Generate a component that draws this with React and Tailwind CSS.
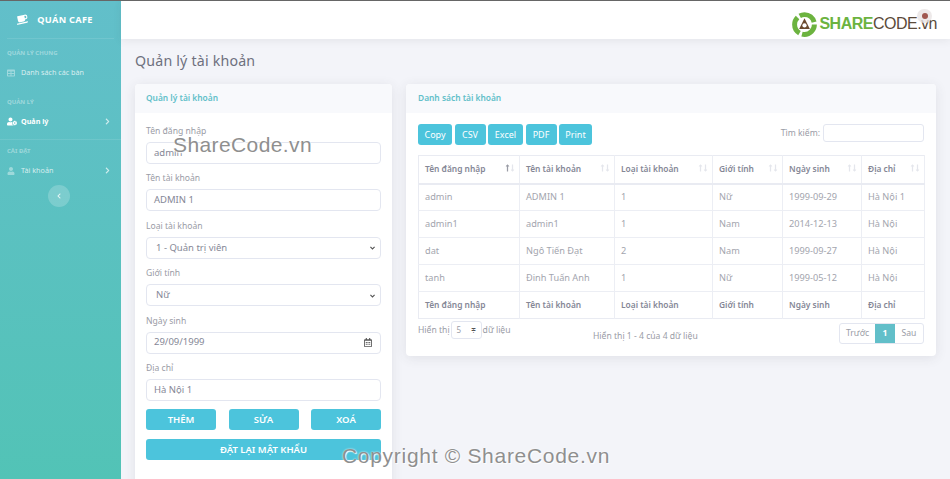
import React from 'react';
import { FaCoffee, FaTable, FaUserCog, FaUser, FaChevronRight, FaChevronLeft, FaRegCalendarAlt, FaLongArrowAltUp, FaLongArrowAltDown } from 'react-icons/fa';

const font = "font-['Noto_Sans',sans-serif]";

const rows = [
    ['admin', 'ADMIN 1', '1', 'Nữ', '1999-09-29', 'Hà Nội 1'],
    ['admin1', 'admin1', '1', 'Nam', '2014-12-13', 'Hà Nội'],
    ['dat', 'Ngô Tiến Đạt', '2', 'Nam', '1999-09-27', 'Hà Nội'],
    ['tanh', 'Đinh Tuấn Anh', '1', 'Nữ', '1999-05-12', 'Hà Nội'],
];
const cols = ['Tên đăng nhập', 'Tên tài khoản', 'Loại tài khoản', 'Giới tính', 'Ngày sinh', 'Địa chỉ'];
const colWidths = ['w-[101px]', 'w-[95px]', 'w-[98px]', 'w-[70px]', 'w-[79px]', 'w-[63px]'];

const SideHeading = ({ children }) => (
    <div className="text-[6px] leading-[8px] font-bold text-white/40 px-[7px] uppercase">{children}</div>
);

const SideItem = ({ icon, label, active, arrow }) => (
    <div className={`flex items-center h-[31px] pl-[7px] pr-[11px] text-[7.2px] ${active ? 'text-white font-bold' : 'text-white/75'}`}>
        <span className="w-[14px] flex">{icon}</span>
        <span className="flex-1">{label}</span>
        {arrow && <FaChevronRight className="w-[5px] h-[7px] text-white/70" />}
    </div>
);

const Sidebar = () => (
    <div className="w-[121px] shrink-0 bg-gradient-to-b from-[#62bfca] to-[#52c3b6] flex flex-col">
        <div className="flex items-center justify-center gap-[9px] h-[38px] mx-[7px] border-b border-white/10 pr-[12px]">
            <FaCoffee className="w-[12px] h-[11px] text-white -rotate-12" />
            <span className="text-[9.2px] font-bold tracking-[0.3px] text-white">QUÁN CAFE</span>
        </div>
        <div className="pt-[10px]">
            <SideHeading>Quản lý chung</SideHeading>
            <SideItem icon={<FaTable className="w-[8px] h-[8px] text-white/40" />} label="Danh sách các bàn" />
        </div>
        <div className="pt-[10px] pb-[2px] border-b border-white/10 mx-0">
            <SideHeading>Quản lý</SideHeading>
            <SideItem active arrow icon={<FaUserCog className="w-[10px] h-[9px] text-white" />} label="Quản lý" />
        </div>
        <div className="pt-[7px]">
            <SideHeading>Cài đặt</SideHeading>
            <SideItem arrow icon={<FaUser className="w-[8px] h-[8px] text-white/40" />} label="Tài khoản" />
        </div>
        <div className="flex justify-center pr-[3px] -mt-[1px]">
            <div className="w-[22px] h-[22px] rounded-full bg-white/20 flex items-center justify-center">
                <FaChevronLeft className="w-[4px] h-[6px] text-white/80" />
            </div>
        </div>
    </div>
);

const Logo = () => (
    <div className="flex items-center">
        <svg viewBox="0 0 30 30" className="w-[27px] h-[27px]">
            <circle cx="15" cy="15" r="11" fill="none" stroke="#6cb33f" strokeWidth="5.5" strokeDasharray="20 3" />
            <path d="M15 8 L21 20 L9 20 Z" fill="#6b4a2f" />
            <circle cx="15" cy="16" r="2.4" fill="#fff" />
        </svg>
        <span className="ml-[1px] text-[16px] leading-none font-['Liberation_Sans',sans-serif] relative tracking-[-0.5px]">
            <span className="font-bold text-[#6cb33f]">SHARE</span>
            <span className="text-[#5b4a3a]">CODE</span>
            <span className="text-[#5b4a3a]">.vn</span>
            <span className="absolute right-[5px] -top-[7px] w-[15px] h-[14px] rounded-full bg-[#e8e4e4]/80 flex items-center justify-center">
                <span className="w-[6px] h-[6px] rounded-full bg-[#a0574f]" />
            </span>
        </span>
    </div>
);

const Field = ({ label, children }) => (
    <div className="mb-[8.4px]">
        <div className="text-[8.6px] leading-[11px] text-[#9a9ca6] pt-[1px] mb-[5px]">{label}</div>
        {children}
    </div>
);

const boxCls = 'h-[22px] bg-white border border-[#e3e6f0] rounded-[4px] flex items-center text-[9.5px] text-[#858796]';

const TextBox = ({ value }) => <div className={`${boxCls} pl-[7px]`}>{value}</div>;

const SelectBox = ({ value }) => (
    <div className={`${boxCls} pl-[9px] pr-[4px] justify-between`}>
        <span>{value}</span>
        <svg viewBox="0 0 10 10" className="w-[7px] h-[7px]"><path d="M2 4 L5 7 L8 4" fill="none" stroke="#555" strokeWidth="1.6" /></svg>
    </div>
);

const Btn = ({ label, className }) => (
    <div className={`h-[21px] rounded-[3px] bg-[#4cc4dc] text-white text-[9.5px] font-semibold flex items-center justify-center ${className}`}>{label}</div>
);

const FormCard = () => (
    <div className="w-[257px] shrink-0 h-[420px] bg-white rounded-[4px] shadow-[0_2px_12px_rgba(58,59,69,0.1)] overflow-hidden">
        <div className="h-[29px] bg-[#f8f9fc] flex items-center px-[11px] text-[8.4px] font-semibold text-[#62bfc9]">Quản lý tài khoản</div>
        <div className="px-[11px] pt-[12px]">
            <Field label="Tên đăng nhập"><TextBox value="admin" /></Field>
            <Field label="Tên tài khoản"><TextBox value="ADMIN 1" /></Field>
            <Field label="Loại tài khoản"><SelectBox value="1 - Quản trị viên" /></Field>
            <Field label="Giới tính"><SelectBox value="Nữ" /></Field>
            <Field label="Ngày sinh">
                <div className={`${boxCls} pl-[7px] pr-[8px] justify-between`}>
                    <span>29/09/1999</span>
                    <FaRegCalendarAlt className="w-[8px] h-[9px] text-[#555]" />
                </div>
            </Field>
            <Field label="Địa chỉ"><TextBox value="Hà Nội 1" /></Field>
            <div className="flex justify-between">
                <Btn label="THÊM" className="w-[70px]" />
                <Btn label="SỬA" className="w-[70px]" />
                <Btn label="XOÁ" className="w-[70px]" />
            </div>
            <Btn label="ĐẶT LẠI MẬT KHẨU" className="mt-[9px]" />
        </div>
    </div>
);

const SortIcon = ({ dark }) => (
    <span className={`absolute right-[4px] top-[8px] flex ${dark ? 'text-[#9a9ca6]' : 'text-[#e4e6ec]'}`}>
        <FaLongArrowAltUp className="w-[5px] h-[8px]" />
        <FaLongArrowAltDown className="w-[5px] h-[8px] text-[#e4e6ec]" />
    </span>
);

const TableCard = () => (
    <div className="flex-1 h-[272px] bg-white rounded-[4px] shadow-[0_2px_12px_rgba(58,59,69,0.1)] overflow-hidden">
        <div className="h-[29px] bg-[#f8f9fc] flex items-center px-[12px] text-[8.4px] font-semibold text-[#62bfc9]">Danh sách tài khoản</div>
        <div className="px-[12px] pt-[11px]">
            <div className="flex justify-between items-start h-[31px]">
                <div className="flex gap-[2.5px]">
                    {[['Copy', 'w-[34px]'], ['CSV', 'w-[31px]'], ['Excel', 'w-[35px]'], ['PDF', 'w-[31px]'], ['Print', 'w-[33px]']].map(([b, w]) => (
                        <div key={b} className={`${w} h-[21px] rounded-[3px] bg-[#4cc4dc] text-white text-[9px] flex items-center justify-center`}>{b}</div>
                    ))}
                </div>
                <div className="flex items-center gap-[3px] text-[8.6px] text-[#9a9ca6]">
                    Tìm kiếm:
                    <div className="w-[101px] h-[18px] bg-white border border-[#e3e6f0] rounded-[3px]" />
                </div>
            </div>
            <table className="w-[506px] table-fixed border-collapse text-[9.2px] border border-[#e9ebf2]">
                <thead>
                    <tr className="h-[28px] border-b-2 border-[#e9ebf2]">
                        {cols.map((c, i) => (
                            <th key={c} className={`${colWidths[i]} relative text-left text-[8.4px] font-semibold text-[#858796] px-[6px] border-r border-[#eceef4]`}>
                                {c}<SortIcon dark={i === 0} />
                            </th>
                        ))}
                    </tr>
                </thead>
                <tbody>
                    {rows.map((r) => (
                        <tr key={r[0]} className="h-[27px] border-b border-[#eceef4]">
                            {r.map((v, i) => (
                                <td key={i} className="px-[6px] text-[#a3a5ae] border-r border-[#eceef4]">{v}</td>
                            ))}
                        </tr>
                    ))}
                </tbody>
                <tfoot>
                    <tr className="h-[27px]">
                        {cols.map((c) => (
                            <th key={c} className="text-left text-[8.4px] font-semibold text-[#858796] px-[6px] border-r border-[#eceef4]">{c}</th>
                        ))}
                    </tr>
                </tfoot>
            </table>
            <div className="flex items-start text-[8.6px] text-[#9a9ca6] pt-[2px]">
                <div className="flex items-center gap-[1px] w-[175px]">
                    Hiển thị
                    <div className="w-[31px] h-[18px] border border-[#e3e6f0] rounded-[3px] flex items-center justify-between px-[5px] text-[8px]">
                        <span>5</span><span className="text-[6px] text-[#555]">≑</span>
                    </div>
                    dữ liệu
                </div>
                <div className="pt-[9px]">Hiển thị 1 - 4 của 4 dữ liệu</div>
                <div className="flex h-[21px] mt-[2px] ml-auto border border-[#e3e6f0] rounded-[3px] overflow-hidden">
                    <div className="w-[35px] flex items-center justify-center">Trước</div>
                    <div className="w-[20px] flex items-center justify-center bg-[#62bfc9] text-white font-bold">1</div>
                    <div className="w-[28px] flex items-center justify-center">Sau</div>
                </div>
            </div>
        </div>
    </div>
);

const App = () => {
    return (
        <div className={`relative w-[950px] h-[479px] overflow-hidden flex bg-[#f3f4f9] border-t border-[#666] ${font}`}>
            <Sidebar />
            <div className="flex-1 flex flex-col min-w-0">
                <div className="h-[38px] shrink-0 bg-white shadow-[0_2px_8px_rgba(58,59,69,0.08)] flex items-center justify-end pr-[13px] pt-[8px]">
                    <Logo />
                </div>
                <div className="px-[14px] pt-[11px] flex-1">
                    <div className="text-[14.2px] leading-[22px] text-[#6e707e] tracking-[0.2px] mb-[12px]">Quản lý tài khoản</div>
                    <div className="flex gap-[14px] items-start">
                        <FormCard />
                        <TableCard />
                    </div>
                </div>
            </div>
            {/* watermark lies over the page */}
            <div className="absolute left-[173px] top-[131px] text-[21px] leading-[26px] tracking-[0.4px] text-[#8f8f8f] font-['Liberation_Sans',sans-serif] [text-shadow:0_0_2px_#fff,1px_1px_1px_#fff]">ShareCode.vn</div>
            <div className="absolute left-[342px] top-[442px] text-[21px] leading-[26px] tracking-[0.7px] text-[#8f8f8f] font-['Liberation_Sans',sans-serif] [text-shadow:0_0_2px_#fff,1px_1px_1px_#fff]">Copyright © ShareCode.vn</div>
        </div>
    );
};

export default App;
